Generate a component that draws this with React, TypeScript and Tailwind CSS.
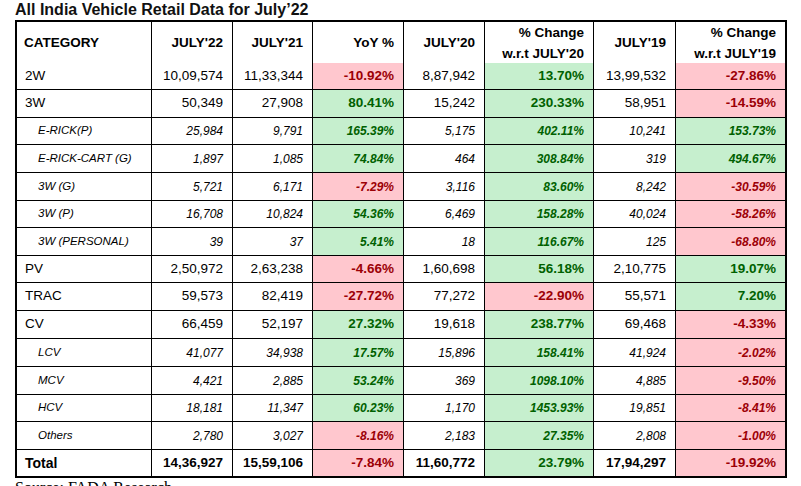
import React from 'react'

type Kind = 'main' | 'sub' | 'total'

type Row = {
  cat: string
  kind: Kind
  h: string
  vals: [string, string, string, string, string, string, string]
}

const ROWS: Row[] = [
  { cat: '2W', kind: 'main', h: 'h-[26px]', vals: ['10,09,574', '11,33,344', '-10.92%', '8,87,942', '13.70%', '13,99,532', '-27.86%'] },
  { cat: '3W', kind: 'main', h: 'h-[27px]', vals: ['50,349', '27,908', '80.41%', '15,242', '230.33%', '58,951', '-14.59%'] },
  { cat: 'E-RICK(P)', kind: 'sub', h: 'h-[26px]', vals: ['25,984', '9,791', '165.39%', '5,175', '402.11%', '10,241', '153.73%'] },
  { cat: 'E-RICK-CART (G)', kind: 'sub', h: 'h-[27px]', vals: ['1,897', '1,085', '74.84%', '464', '308.84%', '319', '494.67%'] },
  { cat: '3W (G)', kind: 'sub', h: 'h-[27px]', vals: ['5,721', '6,171', '-7.29%', '3,116', '83.60%', '8,242', '-30.59%'] },
  { cat: '3W (P)', kind: 'sub', h: 'h-[26px]', vals: ['16,708', '10,824', '54.36%', '6,469', '158.28%', '40,024', '-58.26%'] },
  { cat: '3W (PERSONAL)', kind: 'sub', h: 'h-[27px]', vals: ['39', '37', '5.41%', '18', '116.67%', '125', '-68.80%'] },
  { cat: 'PV', kind: 'main', h: 'h-[26px]', vals: ['2,50,972', '2,63,238', '-4.66%', '1,60,698', '56.18%', '2,10,775', '19.07%'] },
  { cat: 'TRAC', kind: 'main', h: 'h-[27px]', vals: ['59,573', '82,419', '-27.72%', '77,272', '-22.90%', '55,571', '7.20%'] },
  { cat: 'CV', kind: 'main', h: 'h-[27px]', vals: ['66,459', '52,197', '27.32%', '19,618', '238.77%', '69,468', '-4.33%'] },
  { cat: 'LCV', kind: 'sub', h: 'h-[27px]', vals: ['41,077', '34,938', '17.57%', '15,896', '158.41%', '41,924', '-2.02%'] },
  { cat: 'MCV', kind: 'sub', h: 'h-[27px]', vals: ['4,421', '2,885', '53.24%', '369', '1098.10%', '4,885', '-9.50%'] },
  { cat: 'HCV', kind: 'sub', h: 'h-[26px]', vals: ['18,181', '11,347', '60.23%', '1,170', '1453.93%', '19,851', '-8.41%'] },
  { cat: 'Others', kind: 'sub', h: 'h-[27px]', vals: ['2,780', '3,027', '-8.16%', '2,183', '27.35%', '2,808', '-1.00%'] },
  { cat: 'Total', kind: 'total', h: 'h-[26px]', vals: ['14,36,927', '15,59,106', '-7.84%', '11,60,772', '23.79%', '17,94,297', '-19.92%'] },
]

const COLS = 'grid grid-cols-[134px_80px_79px_90px_80px_108px_81px_109px] gap-px'

// columns 3, 5, 7 hold the % changes (coloured)
const PCT = [2, 4, 6]

function Cell({ row, value, idx }: { row: Row; value: string; idx: number }) {
  const pct = PCT.includes(idx)
  const neg = value.startsWith('-')
  const size = row.kind === 'sub' ? 'text-[12px] italic' : 'text-[13.5px]'
  const weight = pct || row.kind === 'total' ? 'font-bold' : 'font-normal'
  const colour = pct
    ? neg
      ? 'bg-[#ffc7ce] text-[#9c0006]'
      : 'bg-[#c6efce] text-[#006100]'
    : 'bg-white text-black'
  return (
    <div className={`flex items-center justify-end pr-[9px] ${size} ${weight} ${colour}`}>
      {value}
    </div>
  )
}

function Header() {
  const right = 'bg-white flex items-center justify-end pr-[9px] text-right'
  return (
    <div className={`${COLS} h-[39px] mb-px text-[13.5px] font-bold text-black`}>
      <div className="bg-white flex items-center pl-[7px]">CATEGORY</div>
      <div className={right}>JULY'22</div>
      <div className={right}>JULY'21</div>
      <div className={right}>YoY %</div>
      <div className={right}>JULY'20</div>
      <div className="bg-white pr-[9px] text-right leading-[21px]">
        % Change
        <br />
        w.r.t JULY'20
      </div>
      <div className={right}>JULY'19</div>
      <div className="bg-white pr-[9px] text-right leading-[21px]">
        % Change
        <br />
        w.r.t JULY'19
      </div>
    </div>
  )
}

export default function App() {
  return (
    <div className="w-[801px] h-[486px] overflow-hidden bg-white font-['Liberation_Sans',Arial,sans-serif]">
      <div className="h-[20px] pt-px pl-[15px] text-[16px] leading-[18px] font-bold text-[#111]">
        All India Vehicle Retail Data for July’22
      </div>

      {/* table */}
      <div className="ml-[15px] w-fit border-2 border-black bg-black flex flex-col gap-px">
        <Header />
        {ROWS.map((row) => (
          <div key={row.cat} className={`${COLS} ${row.h}`}>
            <div
              className={`bg-white flex items-center text-black ${
                row.kind === 'sub'
                  ? 'pl-[21px] text-[11.5px] italic'
                  : row.kind === 'total'
                    ? 'pl-[8px] text-[14px] font-bold'
                    : 'pl-[8px] text-[13.5px]'
              }`}
            >
              {row.cat}
            </div>
            {row.vals.map((v, i) => (
              <Cell key={i} row={row} value={v} idx={i} />
            ))}
          </div>
        ))}
      </div>

      <div className="pt-[2px] pl-[15px] font-['Liberation_Serif',serif] text-[16px] leading-[16px] text-black">
        Source: FADA Research
      </div>
    </div>
  )
}
